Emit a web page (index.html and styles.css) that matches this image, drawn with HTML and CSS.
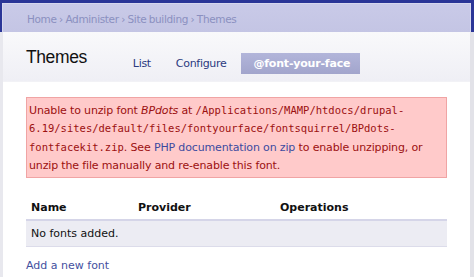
FILE: index.html
```html
<!DOCTYPE html>
<html>
<head>
<meta charset="utf-8">
<link rel="stylesheet" href="styles.css">
</head>
<body>
<div class="top">
  <div class="crumbs">Home › Administer › Site building › Themes</div>
</div>
<div class="main">
  <div class="head">
    <h1 class="title">Themes</h1>
    <ul class="tabs">
      <li class="tab">List</li>
      <li class="tab">Configure</li>
      <li class="tab active">@font-your-face</li>
    </ul>
  </div>
  <div class="content">
    <div class="error">Unable to unzip font <em>BPdots</em> at <code>/Applications/MAMP/htdocs/drupal-6.19/sites/default/files/fontyourface/fontsquirrel/BPdots-fontfacekit.zip</code>. See <a class="link" href="#">PHP documentation on zip</a> to enable unzipping, or unzip the file manually and re-enable this font.</div>
    <table class="fonts">
      <thead>
        <tr><th class="c1">Name</th><th class="c2">Provider</th><th>Operations</th></tr>
      </thead>
      <tbody>
        <tr><td colspan="3">No fonts added.</td></tr>
      </tbody>
    </table>
    <a class="add" href="#">Add a new font</a>
  </div>
</div>
</body>
</html>
```
FILE: styles.css
```css
html, body {
  margin: 0;
  padding: 0;
  background: #ffffff;
  font-family: "DejaVu Sans", sans-serif;
  font-size: 11px;
  overflow: hidden;
  height: 277px;
}
.top {
  background: #2a3597;
  padding: 3px 3px 0 2px;
}
.crumbs {
  height: 29px;
  box-sizing: border-box;
  background: linear-gradient(#c9cae8, #c4c5e4);
  border: 1px solid #d6d7ee;
  border-bottom: none;
  color: #8b90c0;
  font-size: 10.5px;
  padding: 9px 0 0 24px;
  letter-spacing: -0.35px;
  word-spacing: -0.5px;
}
.main {
  border-left: 3px solid #e8e8ee;
  border-right: 4px solid #e2e2e8;
  height: 245px;
}
.head {
  height: 50px;
  box-sizing: border-box;
  background: linear-gradient(#f9f9fb, #efeff5);
  border-bottom: 1px solid #f2f2f6;
  display: flex;
  align-items: flex-start;
  padding-left: 23px;
}
.title {
  margin: 15px 0 0 0;
  font-family: "Liberation Sans", sans-serif;
  font-weight: normal;
  font-size: 17.5px;
  color: #111;
  letter-spacing: -0.4px;
}
.tabs {
  list-style: none;
  margin: 21px 0 0 35px;
  padding: 0;
  display: flex;
}
.tab {
  padding: 4px 11px 4px 11px;
  margin-right: 3px;
  color: #2b3a80;
  font-size: 11px;
  letter-spacing: -0.3px;
}
.tab.active {
  background: linear-gradient(#b2b5da, #a2a5cc);
  color: #ffffff;
  font-weight: bold;
  padding: 4px 10px 4px 12px;
  margin-left: 1px;
  letter-spacing: -0.2px;
}
.content {
  padding: 15px 23px 0 23px;
}
.error {
  background: #ffcaca;
  border: 1px solid #f0a4a4;
  color: #9c1010;
  padding: 4px 3px 2px 2px;
  line-height: 18.3px;
  font-size: 11px;
  letter-spacing: -0.15px;
}
.error code {
  font-family: "DejaVu Sans Mono", monospace;
  font-size: 10.5px;
  letter-spacing: 0;
  line-height: 1;
}
.error em {
  line-height: 1;
}
.link {
  color: #3c4aa0;
  text-decoration: none;
}
.fonts {
  width: 100%;
  border-collapse: collapse;
  margin-top: 20px;
}
.fonts th {
  text-align: left;
  font-weight: bold;
  color: #111;
  padding: 3px 5px 5px 5px;
  border-bottom: 2px solid #d5d5e8;
  font-size: 11px;
}
.fonts th.c1 { width: 97px; }
.fonts th.c2 { width: 132px; }
.fonts td {
  background: #ececf3;
  padding: 6px 5px 6px 5px;
  border-bottom: 1px solid #dcdcea;
  color: #111;
  font-size: 11px;
}
.add {
  display: inline-block;
  margin-top: 12px;
  color: #4450a0;
  text-decoration: none;
}
```
